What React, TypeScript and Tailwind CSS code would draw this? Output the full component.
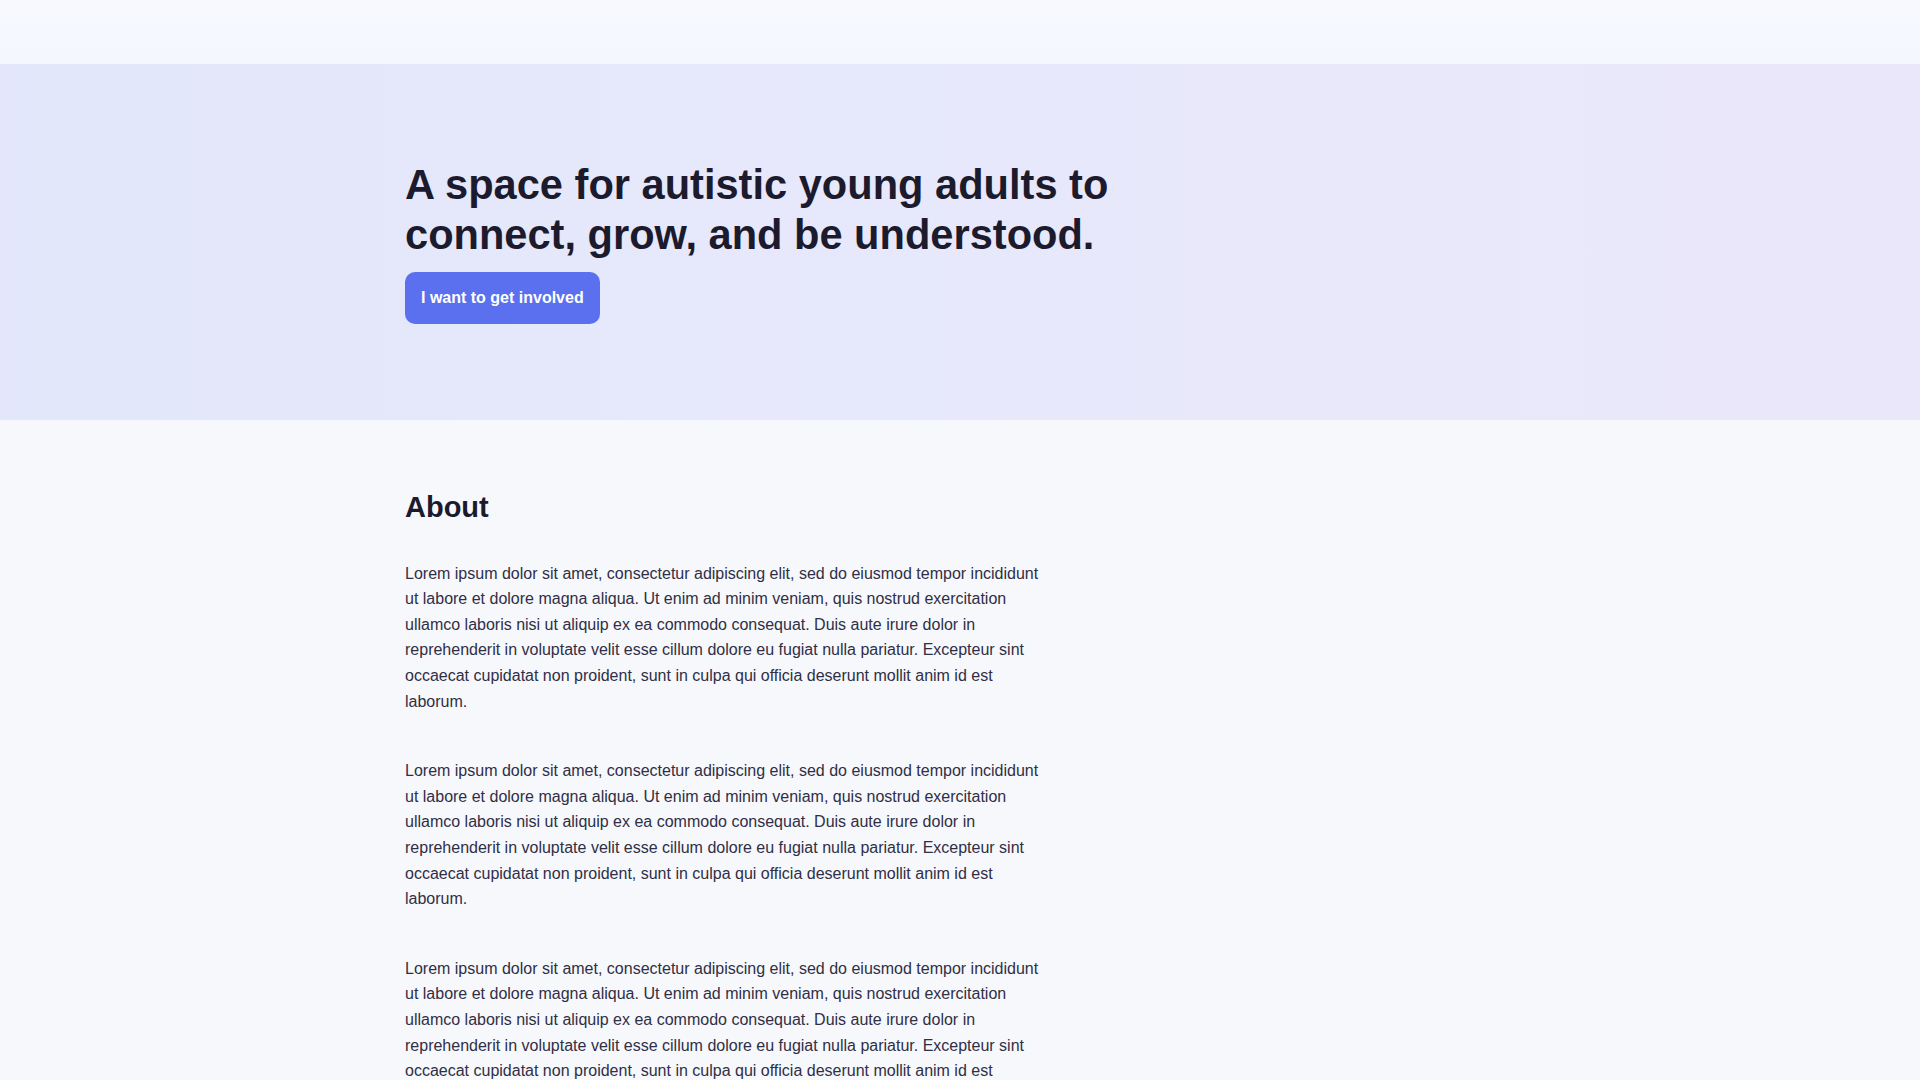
const lorem =
  "Lorem ipsum dolor sit amet, consectetur adipiscing elit, sed do eiusmod tempor incididunt ut labore et dolore magna aliqua. Ut enim ad minim veniam, quis nostrud exercitation ullamco laboris nisi ut aliquip ex ea commodo consequat. Duis aute irure dolor in reprehenderit in voluptate velit esse cillum dolore eu fugiat nulla pariatur. Excepteur sint occaecat cupidatat non proident, sunt in culpa qui officia deserunt mollit anim id est laborum.";

function Section({ title, paragraphs }: { title: string; paragraphs: number }) {
  return (
    <section className="pt-[70px] pb-16">
      <div className="max-w-6xl mx-auto px-[21px]">
        <h2 className="text-[29px] leading-[1.2] font-bold text-[#1c1b2e]">{title}</h2>
        <div className="mt-9 max-w-[640px]">
          {Array.from({ length: paragraphs }).map((_, i) => (
            <p key={i} className="text-base leading-[1.6] text-[#2f2f45] mb-[44px]">
              {lorem}
            </p>
          ))}
        </div>
      </div>
    </section>
  );
}

export default function App() {
  return (
    <div className="min-h-screen bg-[#f7f8fc] font-['Liberation_Sans',Arial,sans-serif]">
      {/* Header */}
      <header className="h-16 bg-gradient-to-b from-[#f7f9fe] to-[#f4f7fe] border-b border-[#f8f9fd]" />

      {/* Hero */}
      <section className="bg-gradient-to-r from-[#e3e7fa] via-[#e7e8fb] to-[#ebe7fa] py-24">
        <div className="max-w-6xl mx-auto px-[21px]">
          <h1 className="max-w-3xl text-[41.6px] leading-[1.2] font-bold text-[#1c1b2e]">
            A space for autistic young adults to connect, grow, and be understood.
          </h1>
          <button className="mt-3 px-4 py-3.5 rounded-[10px] bg-[#5b70ee] text-white text-base leading-6 font-bold">
            I want to get involved
          </button>
        </div>
      </section>

      {/* About */}
      <Section title="About" paragraphs={3} />
      <Section title="Get involved" paragraphs={3} />
    </div>
  );
}
